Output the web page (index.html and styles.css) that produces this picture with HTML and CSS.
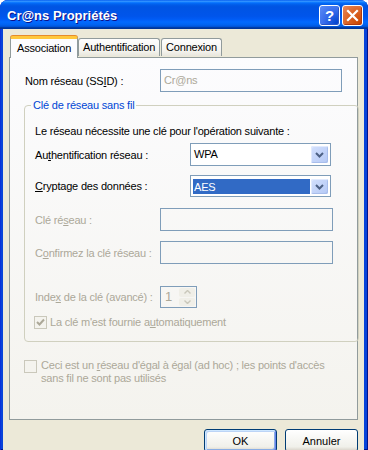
FILE: index.html
```html
<!DOCTYPE html>
<html lang="fr">
<head>
  <meta charset="UTF-8">
  <title>Cr@ns Propriétés</title>
  <link rel="stylesheet" href="styles.css">
</head>
<body>
  <!-- Window -->
  <div class="window">
    <!-- Title Bar -->
    <div class="titlebar">
      <span class="title">Cr@ns Propriétés</span>
      <div class="caption-buttons">
        <div class="cap-btn help">?</div>
        <div class="cap-btn close">
          <svg width="13" height="13" viewBox="0 0 13 13"><path d="M2 2 L11 11 M11 2 L2 11" stroke="#fff" stroke-width="2.2" stroke-linecap="square"/></svg>
        </div>
      </div>
    </div>

    <!-- Window Body -->
    <div class="window-body">
      <!-- Tabs -->
      <div class="tabs">
        <div class="tab active">Association</div>
        <div class="tab">Authentification</div>
        <div class="tab">Connexion</div>
      </div>

      <!-- Tab Panel -->
      <div class="panel">
        <div class="row ssid-row">
          <span class="label">Nom réseau (SS<u>I</u>D) :</span>
          <div class="edit disabled-edit ssid">Cr@ns</div>
        </div>

        <div class="group">
          <span class="legend">Clé de réseau sans fil</span>
          <div class="intro">Le réseau nécessite une clé pour l'opération suivante :</div>

          <div class="row combo-row auth-row">
            <span class="label">Au<u>t</u>hentification réseau :</span>
            <div class="combo">
              <span class="combo-value">WPA</span>
              <span class="combo-btn"><svg width="9" height="6" viewBox="0 0 9 6"><path d="M1 1 L4.5 4.5 L8 1" fill="none" stroke="#4D6185" stroke-width="2"/></svg></span>
            </div>
          </div>

          <div class="row combo-row crypt-row">
            <span class="label"><u>C</u>ryptage des données :</span>
            <div class="combo">
              <span class="combo-value selected">AES</span>
              <span class="combo-btn"><svg width="9" height="6" viewBox="0 0 9 6"><path d="M1 1 L4.5 4.5 L8 1" fill="none" stroke="#4D6185" stroke-width="2"/></svg></span>
            </div>
          </div>

          <div class="row key-row">
            <span class="label muted">Clé ré<u>s</u>eau :</span>
            <div class="edit key"></div>
          </div>

          <div class="row key-row confirm-row">
            <span class="label muted">C<u>o</u>nfirmez la clé réseau :</span>
            <div class="edit key"></div>
          </div>

          <div class="row index-row">
            <span class="label muted">Inde<u>x</u> de la clé (avancé) :</span>
            <div class="spinner">
              <span class="spin-value">1</span>
              <span class="spin-btns">
                <span class="spin-btn"><svg width="7" height="4" viewBox="0 0 7 4"><path d="M0.5 3.5 L3.5 0.5 L6.5 3.5" fill="none" stroke="#C9C7BA" stroke-width="1.4"/></svg></span>
                <span class="spin-btn"><svg width="7" height="4" viewBox="0 0 7 4"><path d="M0.5 0.5 L3.5 3.5 L6.5 0.5" fill="none" stroke="#C9C7BA" stroke-width="1.4"/></svg></span>
              </span>
            </div>
          </div>

          <div class="check-row auto-row">
            <span class="checkbox checked">
              <svg width="9" height="9" viewBox="0 0 9 9"><path d="M1 4 L3.5 6.5 L8 1.5" fill="none" stroke="#ACA899" stroke-width="2"/></svg>
            </span>
            <span class="muted">La clé m'est fournie a<u>u</u>tomatiquement</span>
          </div>
        </div>

        <div class="check-row adhoc-row">
          <span class="checkbox"></span>
          <span class="muted adhoc-text"><span>Ceci est un <u>r</u>éseau d'égal à égal (ad hoc) ; les points d'accès</span><br><span>sans fil ne sont pas utilisés</span></span>
        </div>
      </div>

      <!-- Dialog Buttons -->
      <div class="dialog-buttons">
        <button class="btn default">OK</button>
        <button class="btn">Annuler</button>
      </div>
    </div>
  </div>
</body>
</html>
```

FILE: styles.css
```css
/* General Page Styling */
body {
  margin: 0;
  background: #ffffff;
  font-family: "Liberation Sans", Arial, sans-serif;
  font-size: 11px;
  letter-spacing: -0.2px;
  color: #000000;
}

u {
  text-decoration: underline;
  text-underline-offset: 1px;
}

/* Window Frame */
.window {
  width: 368px;
  height: 450px;
  display: flex;
  flex-direction: column;
  background: #0843D9;
  border-radius: 8px 8px 0 0;
  overflow: hidden;
  box-shadow: inset 1px 0 #0831D9, inset -1px -1px #00138C;
}

.titlebar {
  height: 29px;
  flex: none;
  display: flex;
  align-items: center;
  justify-content: space-between;
  padding: 0 5px 0 7px;
  background: linear-gradient(to bottom, #0058EE 0%, #3593FF 4%, #288EFF 6%, #127DFF 8%, #036FFC 10%, #0262EE 14%, #0057E5 20%, #0054E3 24%, #0055EB 56%, #005BF5 66%, #026AFE 76%, #0062EF 86%, #0052D6 92%, #0040AB 94%, #003092 100%);
}

.title {
  color: #ffffff;
  font-weight: bold;
  font-size: 13px;
  letter-spacing: 0;
  text-shadow: 1px 1px #0F1089;
  margin-top: 1px;
}

.caption-buttons {
  display: flex;
  gap: 2px;
  margin-top: 1px;
}

.cap-btn {
  width: 19px;
  height: 19px;
  border: 1px solid #ffffff;
  border-radius: 3px;
  display: flex;
  align-items: center;
  justify-content: center;
  color: #ffffff;
  font-weight: bold;
  font-size: 15px;
}

.help {
  background: radial-gradient(circle at 90% 90%, #0043CF 0%, #3A6EEC 55%, #5C8DF6 100%);
  box-shadow: inset -1px -1px #2A55C8;
}

.close {
  background: radial-gradient(circle at 90% 90%, #CC4600 0%, #DC6527 55%, #E6895F 100%);
  box-shadow: inset -1px -1px #B03A10;
}

.window-body {
  flex: 1;
  margin: 0 4px 4px 3px;
  padding: 7px 6px 0 6px;
  background: #ECE9D8;
  display: flex;
  flex-direction: column;
}

/* Tabs */
.tabs {
  display: flex;
  align-items: flex-end;
  height: 21px;
  padding-left: 1px;
  position: relative;
  z-index: 1;
}

.tab {
  height: 17px;
  line-height: 17px;
  padding: 0 4px 0 4px;
  margin-bottom: 1px;
  border: 1px solid #919B9C;
  border-bottom: none;
  border-radius: 3px 3px 0 0;
  background: linear-gradient(to bottom, #FEFEFE, #F4F3EE 70%, #E8E6DC);
  margin-right: 1px;
}

.tab.active {
  height: 19px;
  line-height: 19px;
  margin-bottom: -1px;
  padding: 0 6px;
  border-top: 3px solid #FFC83C;
  box-shadow: 0 -1px #E68B2C;
  background: #FCFCFE;
  margin-right: 0;
  margin-left: 0;
}

/* Tab Panel */
.panel {
  height: 350px;
  border: 1px solid #919B9C;
  background: linear-gradient(to bottom, #FCFCFE, #F4F3EE);
  padding: 11px 15px 0 15px;
}

.row {
  display: flex;
  align-items: center;
}

.label {
  flex: none;
}

.muted {
  color: #ACA899;
}

.ssid-row .label {
  width: 135px;
}

.edit {
  height: 21px;
  border: 1px solid #7F9DB9;
  box-sizing: content-box;
  padding: 0 3px;
  line-height: 21px;
}

.ssid {
  width: 176px;
  color: #ACA899;
}

/* Group Box */
.group {
  margin: 13px 0 0 -1px;
  width: 316px;
  height: 235px;
  border: 1px solid #D0D0BF;
  border-radius: 4px;
  padding: 0 7px 0 10px;
}

.legend {
  display: table;
  margin: -7px 0 0 -4px;
  padding: 0 2px;
  line-height: 13px;
  color: #0046D5;
  background: #FBFBFB;
}

.intro {
  margin-top: 13px;
  line-height: 13px;
}

.combo-row {
  height: 23px;
  margin-top: 5px;
}

.crypt-row {
  margin-top: 9px;
  height: 22px;
}

.combo-row .label {
  width: 155px;
}

.combo {
  width: 141px;
  height: 100%;
  box-sizing: border-box;
  border: 1px solid #7F9DB9;
  background: #ffffff;
  display: flex;
  padding: 2px;
}

.combo-value {
  flex: 1;
  line-height: 17px;
  padding-left: 1px;
}

.crypt-row .combo {
  padding: 3px 2px 2px 2px;
}

.combo-value.selected {
  background: #316AC5;
  color: #ffffff;
  line-height: 16px;
}

.combo-btn {
  width: 17px;
  margin-left: 1px;
  border-radius: 2px;
  background: linear-gradient(135deg, #D3E0FD, #B4C8F5);
  box-shadow: inset 1px 1px #E1EAFE, inset -1px -1px #A8BDEB;
  display: flex;
  align-items: center;
  justify-content: center;
}

.key-row {
  height: 23px;
  margin-top: 11px;
}

.confirm-row {
  margin-top: 10px;
}

.key-row .label,
.index-row .label {
  width: 125px;
}

.key {
  width: 165px;
}

.index-row {
  height: 22px;
  margin-top: 22px;
}

.spinner {
  width: 37px;
  height: 100%;
  box-sizing: border-box;
  border: 1px solid #7F9DB9;
  display: flex;
  padding: 1px;
}

.spin-value {
  flex: 1;
  color: #ACA899;
  font-size: 13px;
  line-height: 18px;
  padding-left: 3px;
}

.spin-btns {
  width: 16px;
  display: flex;
  flex-direction: column;
  gap: 1px;
}

.spin-btn {
  flex: 1;
  display: flex;
  align-items: center;
  justify-content: center;
  background: #F0EFE8;
  border-radius: 2px;
}

/* Check Boxes */
.check-row {
  display: flex;
  align-items: flex-start;
  line-height: 13px;
}

.checkbox {
  flex: none;
  width: 11px;
  height: 11px;
  border: 1px solid #CAC8BB;
  background: #F4F3EE;
  display: flex;
  align-items: center;
  justify-content: center;
  margin-right: 3px;
}

.auto-row {
  margin: 8px 0 0 -1px;
}

.adhoc-row {
  margin: 17px 0 0 -1px;
}

.adhoc-row .checkbox {
  margin-top: 1px;
  margin-right: 4px;
}

.adhoc-text {
  width: 300px;
}

/* Dialog Buttons */
.dialog-buttons {
  display: flex;
  justify-content: flex-end;
  gap: 8px;
  margin-top: 9px;
}

.btn {
  width: 73px;
  height: 23px;
  font-family: "Liberation Sans", Arial, sans-serif;
  font-size: 11px;
  color: #000000;
  border: 1px solid #003C74;
  border-radius: 3px;
  background: linear-gradient(to bottom, #FFFFFF, #F0F0EA 80%, #D6D0C5);
  padding: 0;
}

.btn.default {
  box-shadow: inset 1px 1px #CEE7FF, inset -1px -1px #6982EE, inset 2px 2px #BCD4F6, inset -2px -2px #89ADE4;
}
```
